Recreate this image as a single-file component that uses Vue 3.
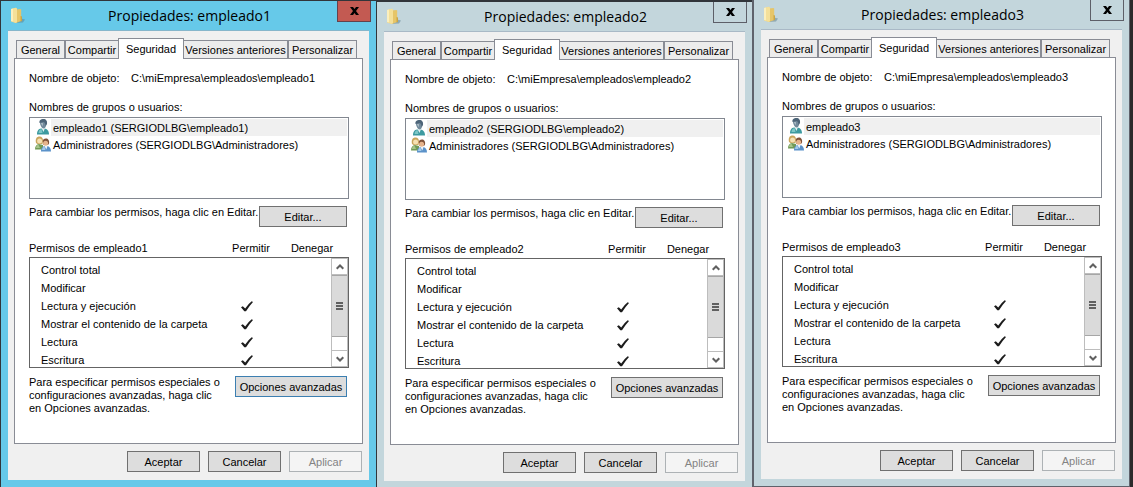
<script setup>
import { ref } from 'vue'

const tabs = ['General', 'Compartir', 'Seguridad', 'Versiones anteriores', 'Personalizar']

const permissions = [
  { name: 'Control total', allow: false },
  { name: 'Modificar', allow: false },
  { name: 'Lectura y ejecución', allow: true },
  { name: 'Mostrar el contenido de la carpeta', allow: true },
  { name: 'Lectura', allow: true },
  { name: 'Escritura', allow: true },
]

const dialogs = ref([
  { id: 'empleado1', principal: 'empleado1 (SERGIODLBG\\empleado1)', kind: 'active' },
  { id: 'empleado2', principal: 'empleado2 (SERGIODLBG\\empleado2)', kind: 'middle' },
  { id: 'empleado3', principal: 'empleado3', kind: 'last' },
])
</script>

<template>
  <main class="desktop">
    <section
      v-for="d in dialogs"
      :key="d.id"
      class="window"
      :class="d.kind"
      role="dialog"
      :aria-labelledby="'title-' + d.id"
    >
      <header class="titlebar">
        <svg class="folder" viewBox="0 0 16 17" aria-hidden="true">
          <path d="M9 11l6 1.500-2 3-8 .5z" fill="#5b7d8c" opacity=".5" />
          <path d="M1 2L6 .8l1 1v13L5.500 16 1 14.500z" fill="#f1d98a" />
          <path d="M1 2L3 1.500v13L1 14z" fill="#fbefbe" />
          <path d="M6 2.500l4.500-.5.700.8V14L6 16z" fill="#e6c568" />
          <path d="M3 1.500l3-.7 1 1V15l-1 1-3-1.500z" fill="#f4e09a" />
          <path d="M10.500 9l1.500.6V14l-1.500.5z" fill="#c9a547" />
        </svg>
        <h1 :id="'title-' + d.id">Propiedades: {{ d.id }}</h1>
        <button class="close" type="button" aria-label="Cerrar">
          <svg viewBox="0 0 9 8" aria-hidden="true">
            <path d="M0 0h3l1.500 2L6 0h3L6 4l3 4H6L4.500 6 3 8H0l3-4z" fill="currentColor" />
          </svg>
        </button>
      </header>

      <div class="panel">
        <div class="tabs" role="tablist">
          <button
            v-for="t in tabs"
            :key="t"
            type="button"
            role="tab"
            class="tab"
            :class="{ selected: t === 'Seguridad' }"
            :aria-selected="t === 'Seguridad'"
          >{{ t }}</button>
        </div>

        <div class="sheet" role="tabpanel">
          <div class="object">
            <span class="object-label">Nombre de objeto:</span>
            <span>C:\miEmpresa\empleados\{{ d.id }}</span>
          </div>

          <div :id="'groups-' + d.id" class="caption">Nombres de grupos o usuarios:</div>
          <ul class="principals" role="listbox" :aria-labelledby="'groups-' + d.id">
            <li role="option" aria-selected="true">
              <svg class="person" viewBox="0 0 16 16" aria-hidden="true">
                <path d="M2 15.500c0-4 1.500-5.500 4-6h3.500c2.500.5 4.500 2 4.500 6z" fill="#3d9aa0" />
                <path d="M3.500 14c.2-2.500 1.200-3.500 3-4l1 4z" fill="#7cc6c6" />
                <path d="M6.500 9h3.500l-1.500 4z" fill="#e6f1f2" />
                <path d="M5 4c0-2.500 1.500-3.500 3.300-3.500S11.800 2 11.500 5c-.3 2.500-1.500 4.500-3 4.500S5.200 6.500 5 4z" fill="#71899b" />
                <path d="M4.500 4C4 1 6 0 8.500 0s4 2 3.500 5l-1.500 2c0-2-.5-3.500-2-4z" fill="#4d6478" />
                <path d="M6 4l2 .2-.5 3z" fill="#b7c5cd" />
              </svg>
              <span class="name picked">{{ d.principal }}</span>
            </li>
            <li role="option" aria-selected="false">
              <svg class="person" viewBox="0 0 16 16" aria-hidden="true">
                <path d="M0 13.500c0-3.500 1.500-5 4-5.500l4 1v4.500z" fill="#719a57" />
                <path d="M1 12c.2-2 1-3 2.500-3.300L5 12z" fill="#a7c58b" />
                <path d="M1 7C0 2.500 2 .5 4.500.5S8 2 8 5L7.500 8h-5z" fill="#c9a55c" />
                <circle cx="4.600" cy="5" r="2.500" fill="#f6e0b2" />
                <path d="M6 15.500c0-4 1.500-5 4-5.500h2c2.500.5 4 2 4 5.500z" fill="#5b92c9" />
                <path d="M7 14c.2-2 1-3 2.500-3.300l1 3.300z" fill="#a5cbe9" />
                <path d="M9.500 10h3l-1.200 3.500z" fill="#eef4fa" />
                <path d="M7.800 6C7.500 3.500 9 2.500 11 2.500s3.600 2 3 5l-1 1.500H8.500z" fill="#805238" />
                <circle cx="10.600" cy="7.300" r="2.500" fill="#e6b48c" />
              </svg>
              <span class="name">Administradores (SERGIODLBG\Administradores)</span>
            </li>
          </ul>

          <div class="action edit">
            <p>Para cambiar los permisos, haga clic en Editar.</p>
            <button type="button" class="btn">Editar...</button>
          </div>

          <div class="perm-head">
            <span :id="'perms-' + d.id">Permisos de {{ d.id }}</span>
            <span class="col">Permitir</span>
            <span class="col">Denegar</span>
          </div>
          <div class="perm-box">
            <table :aria-labelledby="'perms-' + d.id">
              <tbody>
                <tr v-for="p in permissions" :key="p.name">
                  <th scope="row">{{ p.name }}</th>
                  <td>
                    <svg v-if="p.allow" class="check" viewBox="0 0 12 11" role="img" aria-label="Permitido">
                      <path d="M0 6.300L1.800 5.200l2.400 2.200Q7.200 3 10.700.3l1.300.7Q8.300 5 5 10.300H3.300z" fill="#1c1c1c" />
                    </svg>
                  </td>
                  <td></td>
                </tr>
              </tbody>
            </table>
            <div class="scroll">
              <button type="button" class="arrow" aria-label="Subir">
                <svg viewBox="0 0 8 6" aria-hidden="true"><path d="M.7 4.800L4 1.500l3.300 3.300" /></svg>
              </button>
              <div class="track">
                <div class="thumb"><i></i><i></i><i></i></div>
              </div>
              <button type="button" class="arrow" aria-label="Bajar">
                <svg viewBox="0 0 8 6" aria-hidden="true"><path d="M.7 1.200L4 4.500l3.300-3.300" /></svg>
              </button>
            </div>
          </div>

          <div class="action advanced">
            <p>Para especificar permisos especiales o configuraciones avanzadas, haga clic en Opciones avanzadas.</p>
            <button type="button" class="btn" :class="{ focused: d.kind === 'active' }">Opciones avanzadas</button>
          </div>
        </div>

        <footer class="footer">
          <button type="button" class="btn">Aceptar</button>
          <button type="button" class="btn">Cancelar</button>
          <button type="button" class="btn" disabled>Aplicar</button>
        </footer>
      </div>
    </section>
  </main>
</template>

<style>
body {
  background: #2b2b2b;
}
</style>

<style scoped>
* {
  box-sizing: border-box;
}

.desktop {
  display: grid;
  grid-template-columns: 376fr 376fr 378fr;
  min-height: 100vh;
  padding-right: 3px;
  background: #2b2b2b;
  color: #000;
  font: 11px/16px "Liberation Sans", Arial, sans-serif;
}

button {
  margin: 0;
  padding: 0;
  font: inherit;
  color: inherit;
  white-space: nowrap;
}

p,
h1,
ul {
  margin: 0;
  padding: 0;
}

.window {
  display: flex;
  flex-direction: column;
  min-width: 0;
  background: #c3d6dc;
}

.active {
  border: solid #31353a;
  border-width: 1px 0 0 1px;
  padding: 0 7px 7px;
  background: #66c9e9;
}

.middle {
  border: solid #31353a;
  border-width: 2px 0 0 1px;
  padding: 0 7px 6px;
}

.last {
  border: solid #5f626b;
  border-width: 0 1px 1px 2px;
  padding: 0 7px 7px;
}

.titlebar {
  display: grid;
  grid-template-columns: 1fr auto 1fr;
  height: 29px;
  margin-right: -2px;
}

.folder {
  width: 16px;
  height: 17px;
  margin: 6px 0 0 2px;
}

h1 {
  padding-top: 4px;
  font: 14px/22px "Open Sans", "Noto Sans", sans-serif;
  white-space: nowrap;
}

.close {
  display: grid;
  place-items: center;
  justify-self: end;
  width: 34px;
  height: 21px;
  border: 1px solid #5d5f68;
  border-top: 0;
  background: transparent;
}

.active .close {
  border-color: #65414c;
  background: #c35a52;
}

.close svg {
  width: 9px;
  height: 8px;
}

.panel {
  display: flex;
  flex: 1;
  flex-direction: column;
  padding: 7px 6px 8px;
  border-top: 1px solid #a9b9c6;
  background: #f0f0f0;
}

.active .panel {
  border-top-color: #86b6cb;
}

.tabs {
  display: grid;
  grid-template-columns: 49fr 54fr 64fr 105fr 69fr;
  align-items: end;
  height: 20px;
  padding: 0 6px 0 2px;
}

.tab {
  height: 18px;
  border: 1px solid #898c95;
  border-bottom: 0;
  background: #ececec;
  line-height: 18px;
}

.selected {
  position: relative;
  height: 21px;
  margin: 0 -1px -1px;
  background: #fff;
}

.sheet {
  flex: 1;
  padding: 11px 13px 0 14px;
  border: 1px solid #898c95;
  background: #fff;
}

.object {
  display: flex;
}

.object-label {
  width: 102px;
}

.caption {
  margin-top: 13px;
}

.principals {
  height: 82px;
  margin-top: 2px;
  padding: 1px;
  border: 1px solid #828790;
  list-style: none;
}

.principals li {
  display: flex;
  height: 17px;
}

.person {
  flex: none;
  width: 16px;
  height: 16px;
  margin-left: 4px;
}

.name {
  flex: 1;
  padding-left: 2px;
  line-height: 18px;
  white-space: nowrap;
}

.picked {
  background: #f0f0f0;
}

.action {
  display: flex;
  justify-content: space-between;
  align-items: flex-start;
  padding-right: 2px;
  line-height: 13px;
}

.edit {
  margin-top: 7px;
}

.edit p {
  white-space: nowrap;
}

.advanced {
  margin-top: 8px;
}

.advanced p {
  width: 194px;
}

.btn {
  width: 73px;
  height: 21px;
  border: 1px solid #707070;
  background: #ddd;
  line-height: 18px;
}

.edit .btn {
  width: 88px;
}

.advanced .btn {
  width: 112px;
}

.focused {
  border-color: #3c7fb1;
}

.btn:disabled {
  border-color: #adb2b5;
  background: #f4f4f4;
  color: #838383;
}

.perm-head {
  display: grid;
  grid-template-columns: 1fr 60px 62px;
  margin-top: 13px;
  padding-right: 6px;
}

.col {
  text-align: center;
}

.perm-box {
  display: flex;
  height: 111px;
  margin-top: 1px;
  border: 1px solid #646464;
  overflow: hidden;
}

table {
  flex: 1;
  height: 108px;
  margin-top: 3px;
  border-collapse: collapse;
  table-layout: fixed;
}

tr {
  height: 18px;
}

th {
  padding: 0 0 0 11px;
  font-weight: normal;
  text-align: left;
  white-space: nowrap;
}

td {
  width: 56px;
  padding: 0;
  text-align: center;
}

.check {
  display: block;
  width: 12px;
  height: 11px;
  margin: 0 auto;
}

.scroll {
  display: flex;
  flex-direction: column;
  width: 17px;
  border: 1px solid #bdbdbd;
  border-width: 0 1px;
}

.arrow {
  display: grid;
  place-items: center;
  height: 17px;
  border: 1px solid #bdbdbd;
  border-width: 1px 0;
  background: #fff;
}

.arrow svg {
  width: 8px;
  height: 6px;
  fill: none;
  stroke: #606060;
  stroke-width: 2;
}

.track {
  flex: 1;
}

.thumb {
  display: flex;
  flex-direction: column;
  align-items: center;
  justify-content: center;
  gap: 1px;
  height: 62px;
  border: 1px solid #a6a6a6;
  border-width: 1px 0;
  background: #dadada;
}

.thumb i {
  width: 7px;
  height: 2px;
  background: #606060;
}

.footer {
  display: flex;
  justify-content: flex-end;
  gap: 8px;
  padding: 7px 1px 0 0;
}
</style>
